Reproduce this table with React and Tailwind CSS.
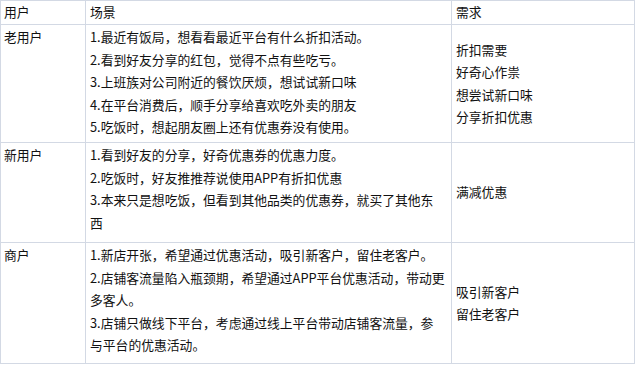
const rows = [
  {
    user: "老用户",
    h: "h-[118px]",
    scenes: [
      "1.最近有饭局，想看看最近平台有什么折扣活动。",
      "2.看到好友分享的红包，觉得不点有些吃亏。",
      "3.上班族对公司附近的餐饮厌烦，想试试新口味",
      "4.在平台消费后，顺手分享给喜欢吃外卖的朋友",
      "5.吃饭时，想起朋友圈上还有优惠券没有使用。",
    ],
    needs: ["折扣需要", "好奇心作祟", "想尝试新口味", "分享折扣优惠"],
  },
  {
    user: "新用户",
    h: "h-[100px]",
    scenes: [
      "1.看到好友的分享，好奇优惠券的优惠力度。",
      "2.吃饭时，好友推推荐说使用APP有折扣优惠",
      "3.本来只是想吃饭，但看到其他品类的优惠券，就买了其他东",
      "西",
    ],
    needs: ["满减优惠"],
  },
  {
    user: "商户",
    h: "h-[121px]",
    scenes: [
      "1.新店开张，希望通过优惠活动，吸引新客户，留住老客户。",
      "2.店铺客流量陷入瓶颈期，希望通过APP平台优惠活动，带动更",
      "多客人。",
      "3.店铺只做线下平台，考虑通过线上平台带动店铺客流量，参",
      "与平台的优惠活动。",
    ],
    needs: ["吸引新客户", "留住老客户"],
  },
]

export default function App() {
  return (
    <div className="w-[638px] h-[367px] bg-white overflow-hidden text-[12.8px] leading-[22.5px] text-[#111] font-['Noto_Sans_CJK_SC','Liberation_Sans',sans-serif]">
      <table className="table-fixed border-collapse w-[634px]">
        <colgroup>
          <col className="w-[85px]" />
          <col className="w-[366px]" />
          <col className="w-[183px]" />
        </colgroup>
        <thead>
          <tr className="h-[24px]">
            <th className="border border-[#d3d9e4] px-[3px] py-0 text-left font-normal align-middle">用户</th>
            <th className="border border-[#d3d9e4] px-[4px] py-0 text-left font-normal align-middle">场景</th>
            <th className="border border-[#d3d9e4] px-[4px] py-0 text-left font-normal align-middle">需求</th>
          </tr>
        </thead>
        <tbody>
          {rows.map((r) => (
            <tr key={r.user} className={r.h}>
              <td className="border border-[#d3d9e4] px-[3px] pt-[1px] align-top">{r.user}</td>
              <td className="border border-[#d3d9e4] px-[4px] pt-[1px] align-top">
                {r.scenes.map((s, i) => (
                  <div key={i} className="whitespace-nowrap">{s}</div>
                ))}
              </td>
              <td className="border border-[#d3d9e4] px-[4px] align-middle">
                {r.needs.map((n) => (
                  <div key={n}>{n}</div>
                ))}
              </td>
            </tr>
          ))}
        </tbody>
      </table>
    </div>
  )
}
